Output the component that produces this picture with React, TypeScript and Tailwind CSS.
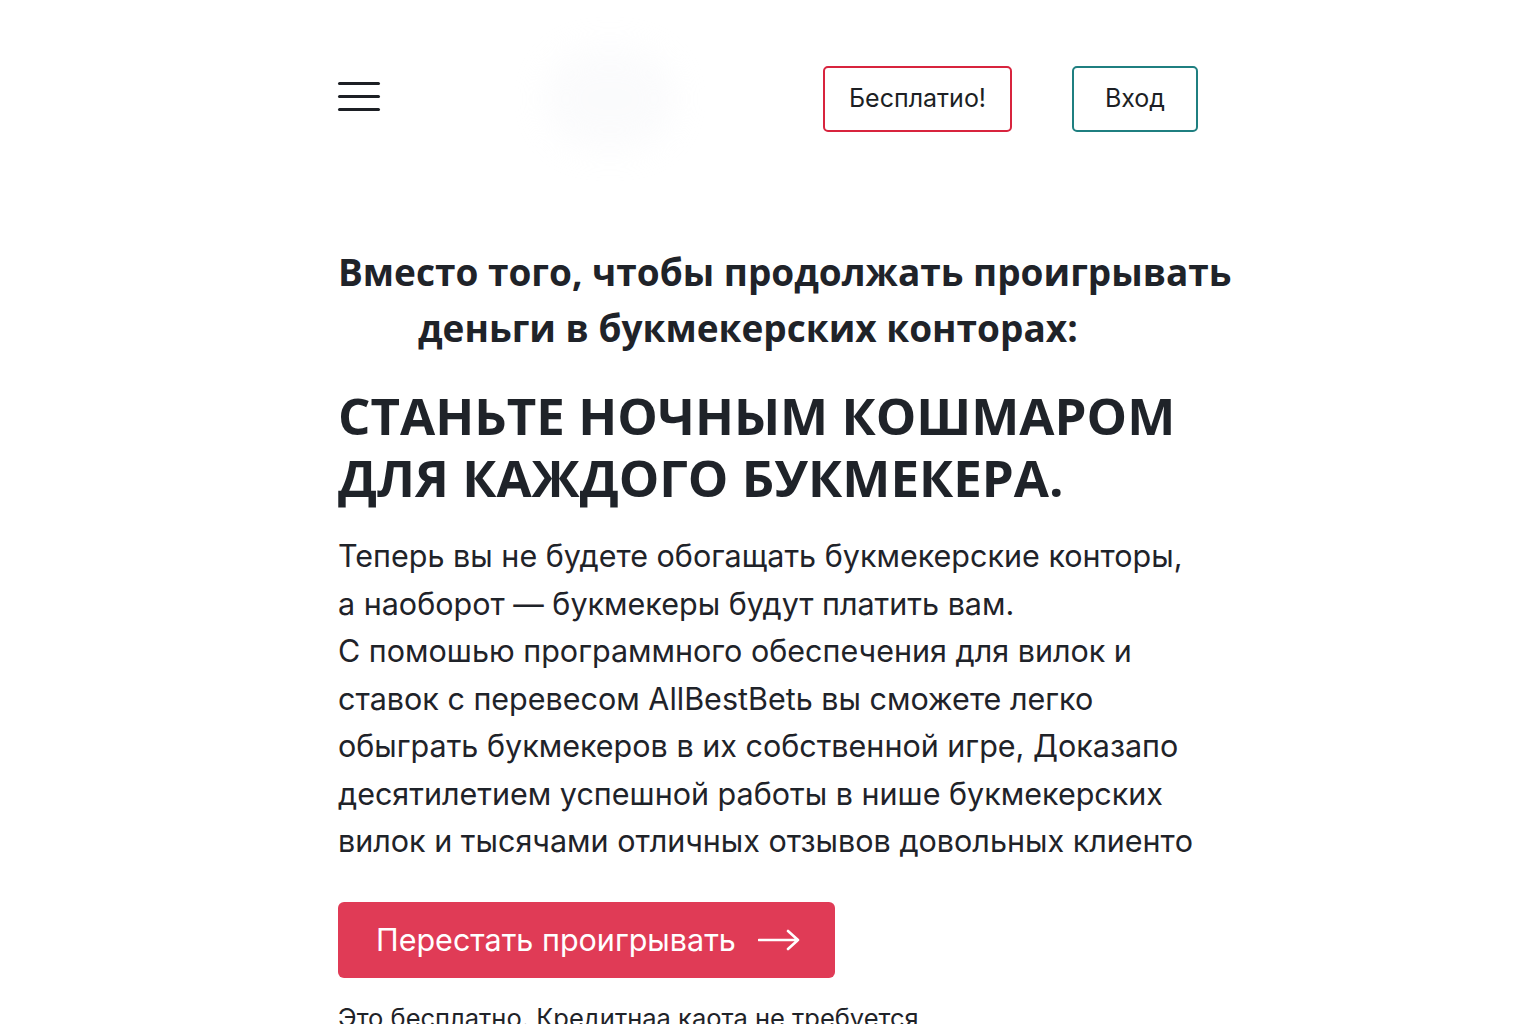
import React from "react";

const heading = { fontFamily: '"Open Sans", "Noto Sans", sans-serif' };
const body = { fontFamily: 'Inter, "Noto Sans", sans-serif' };

const paragraph = [
  "Теперь вы не будете обогащать букмекерские конторы,",
  "а наоборот — букмекеры будут платить вам.",
  "С помошью программного обеспечения для вилок и",
  "ставок с перевесом AllBestBetь вы сможете легко",
  "обыграть букмекеров в их собственной игре, Доказапо",
  "десятилетием успешной работы в нише букмекерских",
  "вилок и тысячами отличных отзывов довольных клиентo",
];

const Header = () => (
  <header className="flex items-center h-[66px]">
    <button className="flex flex-col gap-[10px] w-[42px] mb-[6px]">
      <span className="h-[3px] w-full bg-[#1c1f24] rounded-sm" />
      <span className="h-[3px] w-full bg-[#1c1f24] rounded-sm" />
      <span className="h-[3px] w-full bg-[#1c1f24] rounded-sm" />
    </button>
    <div className="ml-[165px] w-[130px] h-[100px] rounded-full bg-[#f1f2f6] blur-lg opacity-30" />
    <div className="ml-auto flex items-center gap-[60px]">
      <button
        style={body}
        className="h-[66px] w-[189px] border-2 border-[#d8243e] rounded-[5px] text-[25px] text-[#1c1f24]"
      >
        Бесплатио!
      </button>
      <button
        style={body}
        className="h-[66px] w-[126px] border-2 border-[#1f7f80] rounded-[5px] text-[25px] text-[#1c1f24]"
      >
        Вход
      </button>
    </div>
  </header>
);

export default function App() {
  return (
    <div className="min-h-screen bg-white text-[#1f2329]">
      <div className="w-[860px] mx-auto pt-[66px]">
        <Header />
        <h2 style={heading} className="mt-[112px] text-[37px] font-bold leading-[56px] whitespace-nowrap">
          <span className="block">Вместо того, чтобы продолжать проигрывать</span>
          <span className="block pl-[80px]">деньги в букмекерских конторах:</span>
        </h2>
        <h1 style={heading} className="mt-[28px] text-[51px] font-bold leading-[62px] whitespace-nowrap">
          <span className="block">СТАНЬТЕ НОЧНЫМ КОШМАРОМ</span>
          <span className="block">ДЛЯ КАЖДОГО БУКМЕКЕРА.</span>
        </h1>
        <div style={body} className="mt-[24px] text-[30.5px] leading-[47.5px] whitespace-nowrap">
          {paragraph.map((line) => (
            <p key={line}>{line}</p>
          ))}
        </div>
        <button
          style={body}
          className="mt-[37px] flex items-center gap-[22px] h-[76px] w-[497px] pl-[38px] bg-[#e03b56] rounded-[6px] text-white text-[30.5px]"
        >
          Перестать проигрывать
          <svg width="42" height="22" viewBox="0 0 42 22" fill="none" stroke="white" strokeWidth="2.6" strokeLinecap="round" strokeLinejoin="round">
            <path d="M1 11h39M30 2l10 9-10 9" />
          </svg>
        </button>
        <p style={body} className="mt-[21px] text-[25.5px] text-[#1f2329] whitespace-nowrap">
          Это бесплатно. Кредитнаа каота не требуется
        </p>
      </div>
    </div>
  );
}
